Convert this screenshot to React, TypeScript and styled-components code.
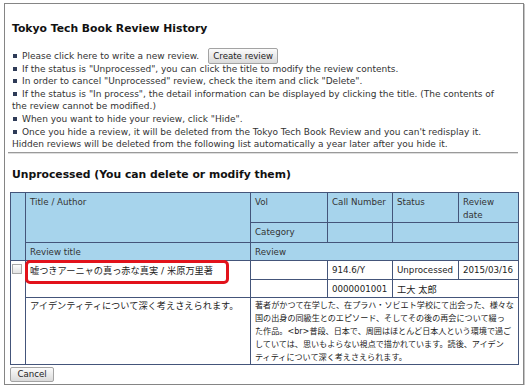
import React from "react";
import styled, { createGlobalStyle } from "styled-components";

const Global = createGlobalStyle`
  html, body { margin: 0; padding: 0; background: #fff; }
  body { font-family: "DejaVu Sans", Verdana, sans-serif; color: #333; }
`;

const JP = `"DejaVu Sans", "Noto Sans CJK JP", sans-serif`;

const Frame = styled.div`
  box-sizing: border-box;
  margin: 3px 0 0 4px;
  width: 520px;
  height: 382px;
  border: 1px solid #858585;
  box-shadow: 1px 1px 0 #c4c4c4;
  padding: 19px 5px 0 5px;
`;

const PageTitle = styled.h1`
  margin: 0 0 15px 2px;
  font-size: 10.8px;
  line-height: 12px;
  font-weight: bold;
  color: #111;
`;

const Notes = styled.div`
  margin-left: 2px;
  font-size: 9px;
  line-height: 12.6px;
  color: #333;
`;

const Note = styled.div``;

const Bullet = styled.span`
  display: inline-block;
  width: 4px;
  height: 4px;
  background: #2e3b57;
  vertical-align: middle;
  margin: 0 5px 1px 1px;
`;

const Button = styled.button<{ $w: number }>`
  box-sizing: border-box;
  font-family: "DejaVu Sans", Verdana, sans-serif;
  font-size: 8.6px;
  width: ${(p) => p.$w}px;
  height: 15px;
  padding: 0;
  border: 1px solid #a3a3a3;
  border-radius: 2px;
  background: linear-gradient(#fbfbfb, #dadada);
  color: #222;
  line-height: 13px;
`;

const InlineButton = styled(Button)`
  height: 16px;
  line-height: 14px;
  vertical-align: middle;
  margin: -3px 0 -2px 9px;
`;

const Divider = styled.div`
  margin: 1px 0 0 -2px;
  border-top: 1px solid #9a9a9a;
  border-bottom: 1px solid #dedede;
`;

const SectionTitle = styled.h2`
  margin: 15px 0 11px 2px;
  font-size: 10.8px;
  line-height: 12px;
  font-weight: bold;
  color: #111;
`;

const Table = styled.table`
  width: 508px;
  border-collapse: collapse;
  table-layout: fixed;
  font-size: 8.7px;
  line-height: 13px;
  border: 1px solid #44557a;
`;

const Row = styled.tr<{ $h?: number }>`
  height: ${(p) => (p.$h ? `${p.$h}px` : "auto")};
`;

const Head = styled.td`
  background: #a7d4ec;
  border: 1px solid #44557a;
  padding: 3px 3px 0 4px;
  vertical-align: top;
  color: #333;
`;

const Cell = styled.td<{ $jp?: boolean }>`
  background: #fff;
  border: 1px solid #44557a;
  padding: 3px 3px 1px 4px;
  vertical-align: top;
  position: relative;
  color: #222;
  font-family: ${(p) => (p.$jp ? JP : "inherit")};
  font-size: ${(p) => (p.$jp ? "9.2px" : "8.7px")};
`;

const TextCell = styled.td<{ $small?: boolean }>`
  background: #fff;
  border: 1px solid #44557a;
  padding: 1px 2px 0 4px;
  vertical-align: top;
  color: #222;
  font-family: ${JP};
  font-size: ${(p) => (p.$small ? "8.1px" : "9.2px")};
  white-space: nowrap;
  overflow: hidden;
`;

const TextLine = styled.div`
  height: 13px;
  line-height: 13px;
  overflow: hidden;
`;

const BoxCell = styled.td`
  background: #fff;
  border: 1px solid #44557a;
  padding: 3px 1px;
  vertical-align: top;
`;

const Check = styled.span`
  display: block;
  box-sizing: border-box;
  width: 10px;
  height: 10px;
  border: 1px solid #a8a8a8;
  background: linear-gradient(#fdfdfd, #e2e2e2);
`;

const Highlight = styled.span`
  position: absolute;
  left: -1px;
  top: -1px;
  width: 204px;
  height: 24px;
  box-sizing: border-box;
  border: 3px solid #e2121b;
  border-radius: 5px;
  pointer-events: none;
`;

const Footer = styled.div`
  display: flex;
  margin-top: 2px;
`;

const reviewLines = [
  "著者がかつて在学した、在プラハ・ソビエト学校にて出会った、様々な",
  "国の出身の同級生とのエピソード、そしてその後の再会について綴っ",
  "た作品。<br>普段、日本で、周囲はほとんど日本人という環境で過ご",
  "していては、思いもよらない視点で描かれています。読後、アイデン",
  "ティティについて深く考えさえられます。",
];

export default function App() {
  return (
    <>
      <Global />
      <Frame>
        <PageTitle>Tokyo Tech Book Review History</PageTitle>
        <Notes>
          <Note>
            <Bullet />
            Please click here to write a new review.
            <InlineButton $w={70}>Create review</InlineButton>
          </Note>
          <Note>
            <Bullet />
            If the status is "Unprocessed", you can click the title to modify the review contents.
          </Note>
          <Note>
            <Bullet />
            In order to cancel "Unprocessed" review, check the item and click "Delete".
          </Note>
          <Note>
            <Bullet />
            If the status is "In process", the detail information can be displayed by clicking the title. (The contents of
            <br />
            the review cannot be modified.)
          </Note>
          <Note>
            <Bullet />
            When you want to hide your review, click "Hide".
          </Note>
          <Note>
            <Bullet />
            Once you hide a review, it will be deleted from the Tokyo Tech Book Review and you can't redisplay it.
            <br />
            Hidden reviews will be deleted from the following list automatically a year later after you hide it.
          </Note>
        </Notes>
        <Divider />
        <SectionTitle>Unprocessed (You can delete or modify them)</SectionTitle>
        <Table>
          <colgroup>
            <col style={{ width: 15 }} />
            <col style={{ width: 225 }} />
            <col style={{ width: 77 }} />
            <col style={{ width: 65 }} />
            <col style={{ width: 66 }} />
            <col style={{ width: 60 }} />
          </colgroup>
          <tbody>
            <Row $h={30}>
              <Head rowSpan={3} />
              <Head rowSpan={2}>Title / Author</Head>
              <Head>Vol</Head>
              <Head>Call Number</Head>
              <Head>Status</Head>
              <Head>
                Review
                <br />
                date
              </Head>
            </Row>
            <Row $h={20}>
              <Head>Category</Head>
              <Head />
              <Head colSpan={2} />
            </Row>
            <Row $h={18}>
              <Head>Review title</Head>
              <Head colSpan={4}>Review</Head>
            </Row>
            <Row $h={19}>
              <BoxCell rowSpan={3}>
                <Check />
              </BoxCell>
              <Cell rowSpan={2} $jp>
                嘘つきアーニャの真っ赤な真実 / 米原万里著
                <Highlight />
              </Cell>
              <Cell />
              <Cell>914.6/Y</Cell>
              <Cell>Unprocessed</Cell>
              <Cell>2015/03/16</Cell>
            </Row>
            <Row $h={18}>
              <Cell />
              <Cell>0000001001</Cell>
              <Cell colSpan={2} $jp>
                工大 太郎
              </Cell>
            </Row>
            <Row>
              <TextCell>
                <TextLine>アイデンティティについて深く考えさえられます。</TextLine>
              </TextCell>
              <TextCell colSpan={4} $small>
                {reviewLines.map((line, i) => (
                  <TextLine key={i}>{line}</TextLine>
                ))}
              </TextCell>
            </Row>
          </tbody>
        </Table>
        <Footer>
          <Button $w={44}>Cancel</Button>
        </Footer>
      </Frame>
    </>
  );
}
